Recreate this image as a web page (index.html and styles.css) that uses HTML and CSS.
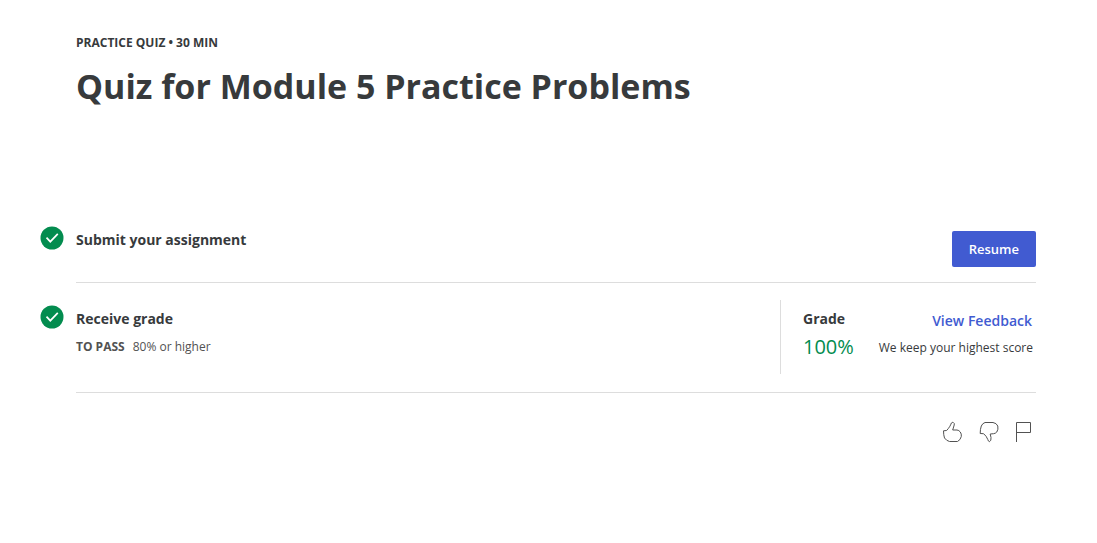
FILE: index.html
```html
<!DOCTYPE html>
<html lang="en">
<head>
<meta charset="utf-8">
<meta name="viewport" content="width=device-width, initial-scale=1">
<title>Quiz for Module 5 Practice Problems</title>
<link rel="stylesheet" href="styles.css">
</head>
<body>
<main class="page">
  <header class="header">
    <p class="eyebrow">PRACTICE QUIZ • 30 MIN</p>
    <h1 class="title">Quiz for Module 5 Practice Problems</h1>
  </header>
  <section class="step step-submit">
    <svg class="check" viewBox="0 0 24 24" aria-hidden="true"><circle cx="12" cy="12" r="11.5" fill="#038c4f"/><path d="M6.500 11.700l3.800 4 7.500-7.800" fill="none" stroke="#fff" stroke-width="1.700"/></svg>
    <div class="step-body">
      <h2 class="heading">Submit your assignment</h2>
      <button class="resume" type="button">Resume</button>
    </div>
  </section>
  <section class="step step-grade">
    <svg class="check" viewBox="0 0 24 24" aria-hidden="true"><circle cx="12" cy="12" r="11.5" fill="#038c4f"/><path d="M6.500 11.700l3.800 4 7.500-7.800" fill="none" stroke="#fff" stroke-width="1.700"/></svg>
    <div class="step-body">
      <div class="receive">
        <h2 class="heading">Receive grade</h2>
        <p class="pass"><strong>TO PASS</strong><span>80% or higher</span></p>
      </div>
      <div class="result">
        <div class="grade">
          <h2 class="heading">Grade</h2>
          <p class="score">100%</p>
        </div>
        <div class="feedback">
          <a class="link" href="#feedback">View Feedback</a>
          <p class="note">We keep your highest score</p>
        </div>
      </div>
    </div>
  </section>
  <footer class="actions">
    <button class="icon" type="button" aria-label="Like"><svg viewBox="0 0 20 22"><path d="M.5 9.800L3.600 9.500C6 7 7.500 4.500 8.400 2Q9 1 10.300 1.500Q11.800 2.300 11.200 4L9.700 9H14Q16 9.200 17.300 11Q18.700 13 18.300 15.500Q17.500 19 14.500 20.500H6.500Q3.500 19.800 1.500 17Q.5 14 .5 9.800z"/></svg></button>
    <button class="icon" type="button" aria-label="Dislike"><svg viewBox="0 0 20 22"><path d="M1.200 12.500Q1.200 8 2.300 5Q3.500 2.300 6 1.500H14Q17.500 2 18.800 5Q19.500 8.500 17.800 11Q16.500 12.500 14.500 12.700L11.200 13L12 16.500Q12.500 20 10.300 20.700Q9.200 20.300 8.800 18.500Q7.500 15 4.600 12.700z"/></svg></button>
    <button class="icon" type="button" aria-label="Flag"><svg viewBox="0 0 20 22"><path d="M1.500 21V1.500H15.500V11.500H1.500"/></svg></button>
  </footer>
</main>
</body>
</html>
```
FILE: styles.css
```css
* { box-sizing: border-box; }
body { margin: 0; background: #fff; color: #373a3c; font-family: "Open Sans", sans-serif; }
h1, h2, p { margin: 0; }
button { font: inherit; cursor: pointer; }
.page { padding: 34px 61px 24px 40px; }
.header { padding-left: 36px; }
.eyebrow { font-size: 12px; line-height: 18px; font-weight: 700; }
.title { margin-top: 10px; font-size: 34px; line-height: 48px; font-weight: 700; }
.step { display: grid; grid-template-columns: 24px 1fr; column-gap: 12px; }
.step-submit { margin-top: 116px; }
.step-body { display: flex; justify-content: space-between; border-bottom: 1px solid #ddd; }
.step-submit .step-body { padding: 5px 0 15px; }
.step-grade { padding-top: 17px; }
.step-grade .step-body { padding-bottom: 18px; }
.check { width: 24px; height: 24px; }
.step-grade .check { margin-top: 5px; }
.heading { font-size: 14px; line-height: 18px; font-weight: 700; }
.resume { padding: 9px 17px; border: 0; border-radius: 2px; background: #415bd1; color: #fff; font-size: 13px; line-height: 18px; font-weight: 600; }
.receive { padding-top: 10px; }
.pass { display: flex; gap: 8px; margin-top: 10px; font-size: 12px; line-height: 18px; color: #525252; }
.result { display: flex; justify-content: space-between; width: 256px; padding: 10px 3px 14px 22px; border-left: 1px solid #ddd; }
.score { margin-top: 6px; font-size: 20px; line-height: 26px; color: #038c4f; }
.feedback { text-align: right; }
.link { display: block; margin-top: 2px; padding-right: 1px; color: #3f5bd1; font-size: 14px; line-height: 18px; font-weight: 600; text-decoration: none; }
.note { margin-top: 9px; font-size: 12px; line-height: 18px; white-space: nowrap; }
.actions { display: flex; justify-content: flex-end; gap: 16px; margin-top: 28px; padding-right: 1px; }
.icon { display: block; width: 20px; height: 22px; padding: 0; border: 0; background: none; }
.icon svg { display: block; width: 20px; height: 22px; fill: none; stroke: #525252; stroke-width: 1; stroke-linejoin: round; }
```
